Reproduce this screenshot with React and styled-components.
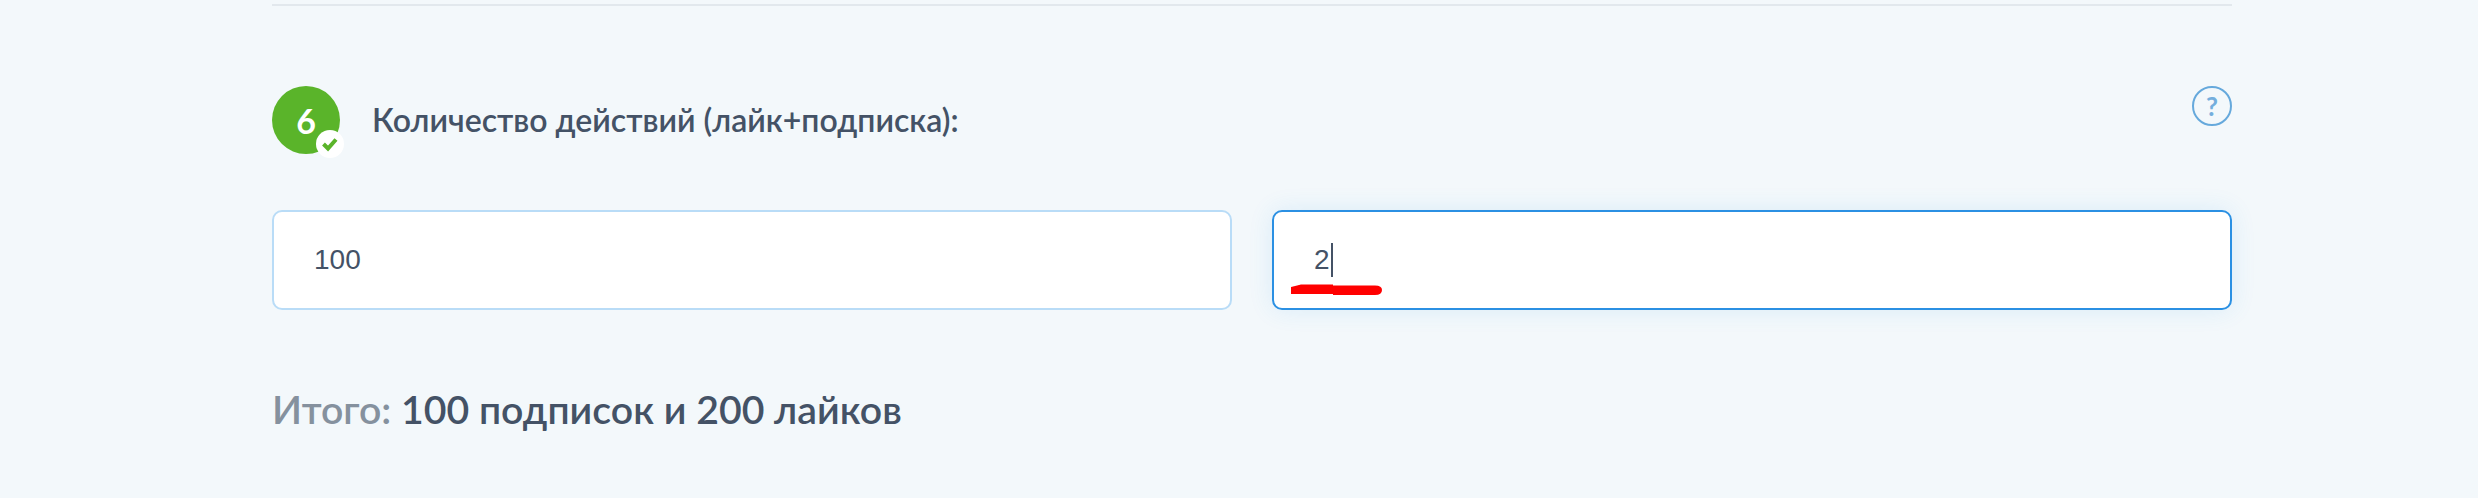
import React from 'react';
import styled, { createGlobalStyle } from 'styled-components';

const GlobalStyle = createGlobalStyle`
  html, body {
    margin: 0;
    padding: 0;
    background: #f3f8fb;
  }

  body {
    height: 498px;
    overflow: hidden;
    font-family: Lato, "Noto Sans", sans-serif;
    color: #445266;
  }
`;

const Page = styled.main`
  width: 1960px;
  margin-left: 272px;
  padding-top: 4px;
`;

const Divider = styled.hr`
  margin: 0;
  border: 0;
  height: 2px;
  background: #e2e8ed;
`;

const StepHeader = styled.header`
  display: flex;
  align-items: flex-start;
  margin-top: 80px;
  height: 68px;
`;

const StepBadge = styled.div`
  position: relative;
  flex: none;
  display: flex;
  align-items: center;
  justify-content: center;
  width: 68px;
  height: 68px;
  border-radius: 50%;
  background: #5ab42a;
  color: #fff;
  font-size: 34px;
  font-weight: 700;
`;

const DoneMark = styled.span`
  position: absolute;
  right: -4px;
  bottom: -4px;
  display: flex;
  align-items: center;
  justify-content: center;
  width: 28px;
  height: 28px;
  border-radius: 50%;
  background: #fff;
`;

const StepTitle = styled.h2`
  margin: 14px 0 0 32px;
  font-size: 32px;
  line-height: 40px;
  font-weight: 600;
  color: #445266;
`;

const HelpButton = styled.button`
  margin-left: auto;
  width: 40px;
  height: 40px;
  padding: 0;
  border: 2px solid #66a9dc;
  border-radius: 50%;
  background: transparent;
  color: #74aedd;
  font-family: Lato, sans-serif;
  font-size: 26px;
  font-weight: 700;
  line-height: 34px;
`;

const Fields = styled.div`
  display: grid;
  grid-template-columns: 1fr 1fr;
  gap: 40px;
  margin-top: 56px;
`;

const Field = styled.div`
  position: relative;
  display: flex;
  align-items: center;
  box-sizing: border-box;
  height: 100px;
  padding-left: 40px;
  background: #fff;
  border: 2px solid ${({ $focused }) => ($focused ? '#2b90e3' : '#b9dcf7')};
  border-radius: 10px;
  box-shadow: ${({ $focused }) => ($focused ? '0 0 24px rgba(43, 144, 227, 0.12)' : 'none')};
  font-family: "Liberation Sans", Arial, sans-serif;
  font-size: 28px;
  color: #445266;
`;

const Caret = styled.span`
  display: inline-block;
  width: 2px;
  height: 34px;
  margin-left: 1px;
  background: #445266;
`;

const Scribble = styled.svg`
  position: absolute;
  left: 17px;
  top: 72px;
`;

const Total = styled.p`
  margin: 75px 0 0;
  font-size: 39.2px;
  line-height: 48px;
  font-weight: 600;
  color: #445266;

  span {
    color: #85919e;
  }
`;

const App = () => (
  <>
    <GlobalStyle />
    <Page>
      <Divider />
      <StepHeader>
        <StepBadge>
          6
          <DoneMark>
            <svg width="18" height="16" viewBox="0 0 18 16" aria-hidden="true">
              <path d="M2.5 8 L7 12.5 L15 3.5" fill="none" stroke="#5ab42a" strokeWidth="4" />
            </svg>
          </DoneMark>
        </StepBadge>
        <StepTitle>Количество действий (лайк+подписка):</StepTitle>
        <HelpButton type="button">?</HelpButton>
      </StepHeader>
      <Fields>
        <Field>100</Field>
        <Field $focused>
          2
          <Caret />
          <Scribble width="92" height="12" viewBox="0 0 92 12" aria-hidden="true">
            <path d="M0 3 L10 0.5 H42 V1.5 H84 Q91 1.5 91 6 Q91 11 84 11 H42 V10 H0 Z" fill="#ff0000" />
          </Scribble>
        </Field>
      </Fields>
      <Total>
        <span>Итого:</span> 100 подписок и 200 лайков
      </Total>
    </Page>
  </>
);

export default App;
